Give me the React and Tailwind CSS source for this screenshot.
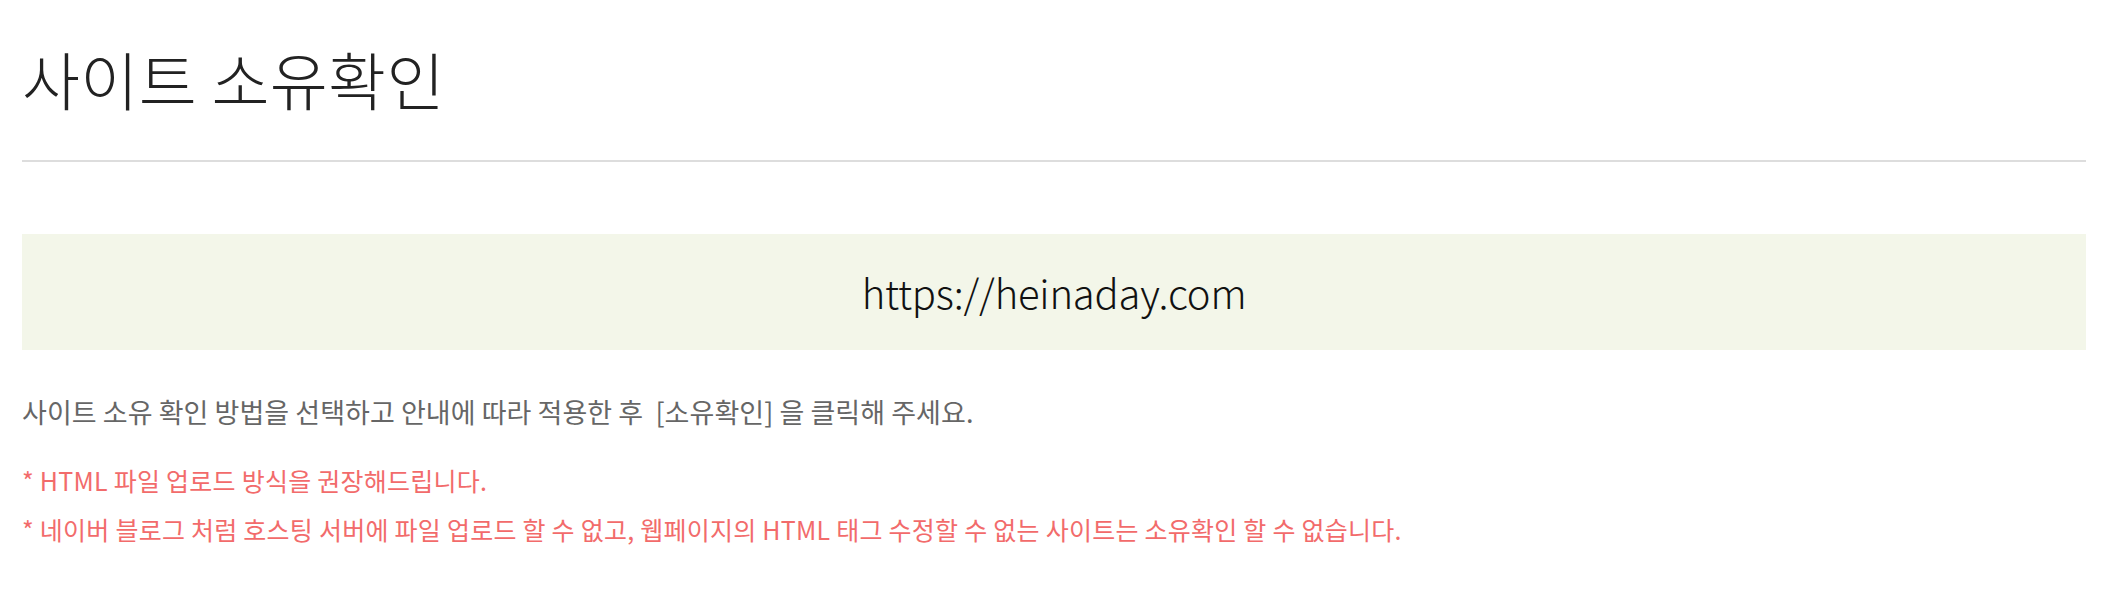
function App() {
  return (
    <div
      className="min-h-screen bg-white pl-[22px] pr-[18px]"
      style={{ fontFamily: '"Noto Sans CJK KR", "Noto Sans", sans-serif' }}
    >
      {/* 제목 */}
      <h1 className="pt-[38px] text-[63px] leading-[80px] font-light tracking-[0.4px] text-[#222]">
        사이트 소유확인
      </h1>
      <div className="mt-[42px] border-t-2 border-[#dddddd]" />

      {/* 사이트 주소 */}
      <div className="mt-[72px] flex h-[116px] items-center justify-center bg-[#f3f6e9]">
        <span className="text-[40px] font-light tracking-[-0.2px] text-[#111]">
          https://heinaday.com
        </span>
      </div>

      {/* 안내 */}
      <p className="mt-[44px] text-[27px] leading-[36px] tracking-[0.05px] text-[#666]">
        사이트 소유 확인 방법을 선택하고 안내에 따라 적용한 후 &nbsp;[소유확인] 을 클릭해 주세요.
      </p>
      <p className="mt-[32px] text-[25px] leading-[36px] tracking-[0.25px] text-[#f26b6b]">
        * HTML 파일 업로드 방식을 권장해드립니다.
      </p>
      <p className="mt-[13px] text-[25px] leading-[36px] tracking-[0.25px] text-[#f26b6b]">
        * 네이버 블로그 처럼 호스팅 서버에 파일 업로드 할 수 없고, 웹페이지의 HTML 태그 수정할 수 없는 사이트는 소유확인 할 수 없습니다.
      </p>
    </div>
  );
}

export default App;
